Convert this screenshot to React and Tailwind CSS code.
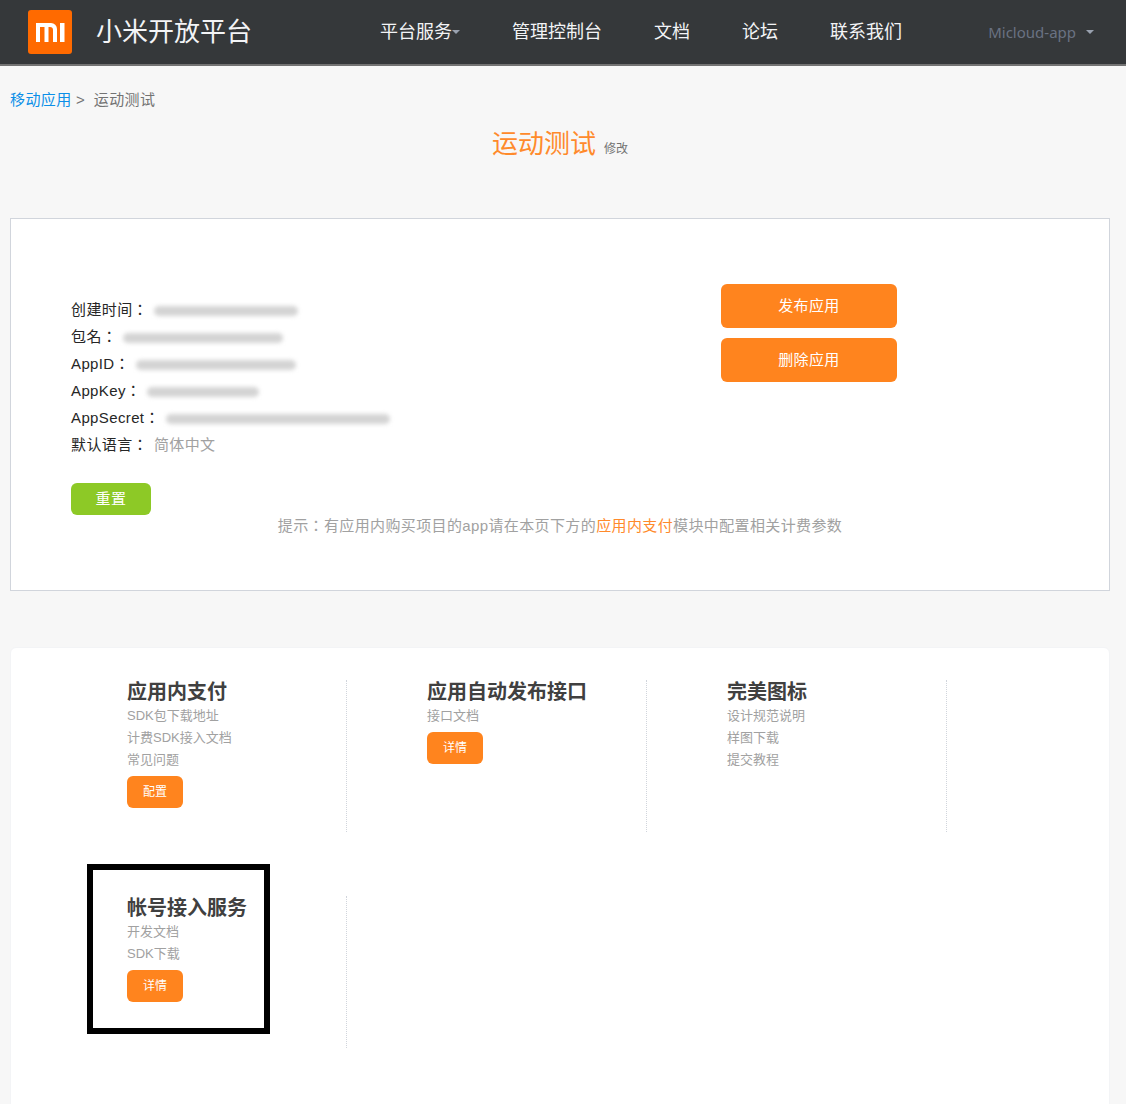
const navItems = ['管理控制台', '文档', '论坛', '联系我们'];

const appInfo = [
  ['创建时间：', 'w-36'],
  ['包名：', 'w-40'],
  ['AppID：', 'w-40'],
  ['AppKey：', 'w-28'],
  ['AppSecret：', 'w-56'],
];

const services = [
  { title: '应用内支付', links: ['SDK包下载地址', '计费SDK接入文档', '常见问题'], action: '配置' },
  { title: '应用自动发布接口', links: ['接口文档'], action: '详情' },
  { title: '完美图标', links: ['设计规范说明', '样图下载', '提交教程'] },
  { title: '帐号接入服务', links: ['开发文档', 'SDK下载'], action: '详情', framed: true },
];

function Caret() {
  return <span className="inline-block border-x-4 border-t-4 border-x-transparent border-t-gray-400" />;
}

function MiLogo() {
  return (
    <svg viewBox="0 0 44 44" className="size-11 shrink-0">
      <rect width="44" height="44" rx="3" fill="#ff6a00" />
      <path
        fill="#fff"
        d="M8 13H23A6 6 0 0 1 29 19V32H25V20A3 3 0 0 0 22 17H20.500V32H16.500V17H12V32H8ZM32 13H36.500V32H32Z"
      />
    </svg>
  );
}

function Header() {
  return (
    <header className="flex items-center border-b-2 border-neutral-500 bg-[#35383a] py-2.5 pr-8 pl-7">
      <MiLogo />
      <span className="ml-6 text-[26px] text-gray-100">小米开放平台</span>
      <nav className="ml-32 flex items-center gap-13 text-lg text-gray-100">
        <span className="flex items-center">
          平台服务
          <Caret />
        </span>
        {navItems.map((n) => (
          <span key={n}>{n}</span>
        ))}
      </nav>
      <span className="ml-auto flex items-center gap-2.5 font-['Noto_Sans'] text-gray-500">
        Micloud-app
        <Caret />
      </span>
    </header>
  );
}

function ServiceCell({ item }) {
  return (
    <div className="relative h-38 border-r border-dotted border-gray-300 pl-20">
      {item.framed && (
        <div className="pointer-events-none absolute -top-8 left-10 h-[170px] w-[183px] border-6 border-black" />
      )}
      <h3 className="text-xl leading-6 font-bold text-neutral-700">{item.title}</h3>
      <div className="mt-0.5 flex flex-col gap-0.5 leading-5 text-neutral-400">
        {item.links.map((l) => (
          <span key={l}>{l}</span>
        ))}
      </div>
      {item.action && (
        <button className="mt-1.5 h-8 w-14 rounded-md bg-[#ff841e] text-xs text-white">{item.action}</button>
      )}
    </div>
  );
}

export default function App() {
  return (
    <div className="h-screen overflow-hidden bg-[#f7f7f7] font-['Liberation_Sans','Noto_Sans_CJK_SC',sans-serif] text-[15px]">
      <Header />

      <main className="pt-6 pr-4 pl-2.5">
        <div className="leading-5 tracking-wide text-neutral-500">
          <span className="text-[#0b8fe8]">移动应用</span> &gt; <span className="ml-1">运动测试</span>
        </div>

        <div className="mt-4 flex items-baseline justify-center gap-2">
          <h1 className="text-[26px] leading-9 text-[#ff8a2b]">运动测试</h1>
          <span className="text-xs text-neutral-500">修改</span>
        </div>

        <section className="mt-14 border border-gray-300 bg-white pt-16 pb-13.5 font-['Liberation_Sans','Noto_Sans_CJK_TC',sans-serif] tracking-wide">
          <div className="flex justify-between pl-15">
            <div className="pt-3.5">
              {appInfo.map(([label, width]) => (
                <div key={label} className="flex h-[27px] items-center gap-1.5 text-neutral-800">
                  {label}
                  <span className={`h-2.5 rounded-full bg-neutral-300 blur-[2px] ${width}`} />
                </div>
              ))}
              <div className="flex h-[27px] items-center gap-1.5 text-neutral-800">
                默认语言：<span className="text-neutral-400">简体中文</span>
              </div>
              <button className="mt-6 h-8 w-20 rounded-md bg-[#8dc926] text-white">重置</button>
            </div>
            <div className="mt-px mr-[212px] flex flex-col gap-2.5">
              <button className="h-11 w-44 rounded-md bg-[#ff841e] text-white">发布应用</button>
              <button className="h-11 w-44 rounded-md bg-[#ff841e] text-white">删除应用</button>
            </div>
          </div>
          <p className="mt-px text-center leading-5 text-neutral-400">
            提示：有应用内购买项目的app请在本页下方的<span className="text-[#ff8a2b]">应用内支付</span>
            模块中配置相关计费参数
          </p>
        </section>

        <section className="mt-14 rounded-md border border-gray-100 bg-white pt-8 pb-16 pl-9 text-[13px]">
          <div className="grid w-[900px] grid-cols-3 gap-y-16">
            {services.map((s) => (
              <ServiceCell key={s.title} item={s} />
            ))}
          </div>
        </section>
      </main>
    </div>
  );
}
